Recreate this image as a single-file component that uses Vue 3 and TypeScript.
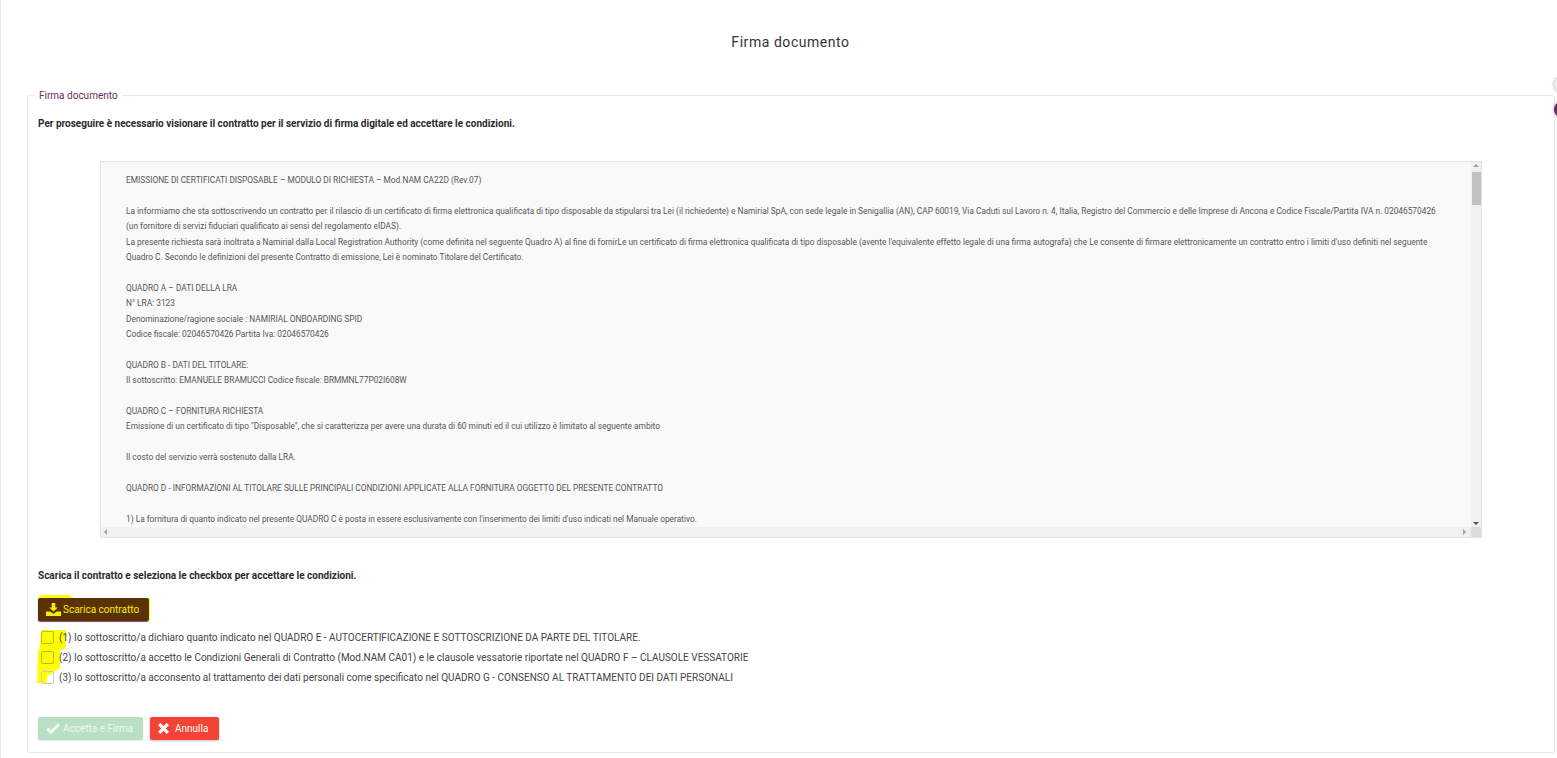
<script setup lang="ts">
const contractLines: string[] = [
  'EMISSIONE DI CERTIFICATI DISPOSABLE – MODULO DI RICHIESTA – Mod.NAM CA22D (Rev.07)',
  '',
  'La informiamo che sta sottoscrivendo un contratto per il rilascio di un certificato di firma elettronica qualificata di tipo disposable da stipularsi tra Lei (il richiedente) e Namirial SpA, con sede legale in Senigallia (AN), CAP 60019, Via Caduti sul Lavoro n. 4, Italia, Registro del Commercio e delle Imprese di Ancona e Codice Fiscale/Partita IVA n. 02046570426',
  '(un fornitore di servizi fiduciari qualificato ai sensi del regolamento eIDAS).',
  'La presente richiesta sarà inoltrata a Namirial dalla Local Registration Authority (come definita nel seguente Quadro A) al fine di fornirLe un certificato di firma elettronica qualificata di tipo disposable (avente l\'equivalente effetto legale di una firma autografa) che Le consente di firmare elettronicamente un contratto entro i limiti d\'uso definiti nel seguente',
  'Quadro C. Secondo le definizioni del presente Contratto di emissione, Lei è nominato Titolare del Certificato.',
  '',
  'QUADRO A – DATI DELLA LRA',
  'N° LRA: 3123',
  'Denominazione/ragione sociale : NAMIRIAL ONBOARDING SPID',
  'Codice fiscale: 02046570426 Partita Iva: 02046570426',
  '',
  'QUADRO B - DATI DEL TITOLARE:',
  'Il sottoscritto: EMANUELE BRAMUCCI Codice fiscale: BRMMNL77P02I608W',
  '',
  'QUADRO C – FORNITURA RICHIESTA',
  'Emissione di un certificato di tipo "Disposable", che si caratterizza per avere una durata di 60 minuti ed il cui utilizzo è limitato al seguente ambito',
  '',
  'Il costo del servizio verrà sostenuto dalla LRA.',
  '',
  'QUADRO D - INFORMAZIONI AL TITOLARE SULLE PRINCIPALI CONDIZIONI APPLICATE ALLA FORNITURA OGGETTO DEL PRESENTE CONTRATTO',
  '',
  '1) La fornitura di quanto indicato nel presente QUADRO C è posta in essere esclusivamente con l\'inserimento dei limiti d\'uso indicati nel Manuale operativo.',
]

const conditions: string[] = [
  '(1) Io sottoscritto/a dichiaro quanto indicato nel QUADRO E - AUTOCERTIFICAZIONE E SOTTOSCRIZIONE DA PARTE DEL TITOLARE.',
  '(2) Io sottoscritto/a accetto le Condizioni Generali di Contratto (Mod.NAM CA01) e le clausole vessatorie riportate nel QUADRO F – CLAUSOLE VESSATORIE',
  '(3) Io sottoscritto/a acconsento al trattamento dei dati personali come specificato nel QUADRO G - CONSENSO AL TRATTAMENTO DEI DATI PERSONALI',
]
</script>

<template>
  <div class="page">
    <h1 class="title">Firma documento</h1>

    <fieldset class="panel">
      <legend>Firma documento</legend>

      <p class="lead lead-top">Per proseguire è necessario visionare il contratto per il servizio di firma digitale ed accettare le condizioni.</p>

      <div class="contract">
        <div class="contract-text">
          <div v-for="(line, i) in contractLines" :key="i" class="line">{{ line }}</div>
        </div>
        <div class="vbar">
          <span class="arrow up"></span>
          <span class="thumb"></span>
          <span class="arrow down"></span>
        </div>
        <div class="hbar">
          <span class="arrow left"></span>
          <span class="arrow right"></span>
        </div>
        <div class="corner"></div>
      </div>

      <p class="lead lead-bottom">Scarica il contratto e seleziona le checkbox per accettare le condizioni.</p>

      <div class="download-wrap">
        <span class="marker-btn"></span>
        <button class="btn btn-download" type="button">
          <svg width="15" height="13" viewBox="0 0 15 13" fill="currentColor">
            <path d="M5.7 0h3.6v4.4h2.6L7.5 8.6 3.1 4.4h2.6z" />
            <path d="M0 8.6h4.2l3.3 2.2 3.3-2.2H15V13H0z" />
          </svg>
          Scarica contratto
        </button>
      </div>

      <div class="conditions">
        <svg class="marker-checks" width="36" height="58" viewBox="0 0 36 58" fill="#ffff00">
          <path d="M7 3H32V21L26 23V41L13 49V56H3L4 24L6 20Z" />
        </svg>
        <label v-for="(text, i) in conditions" :key="i" class="condition">
          <span class="check" :class="{ lit: i < 2 }"></span>
          <span class="condition-text">{{ text }}</span>
        </label>
      </div>

      <div class="actions">
        <button class="btn btn-accept" type="button">
          <svg width="14" height="11" viewBox="0 0 14 11" fill="none" stroke="currentColor" stroke-width="3">
            <path d="M1.2 5.6 5 9.2 12.8 1.4" />
          </svg>
          Accetta e Firma
        </button>
        <button class="btn btn-cancel" type="button">
          <svg width="11" height="11" viewBox="0 0 11 11" fill="none" stroke="currentColor" stroke-width="3.2">
            <path d="M1.2 1.2l8.6 8.6M9.8 1.2l-8.6 8.6" />
          </svg>
          Annulla
        </button>
      </div>
    </fieldset>

    <span class="float-dot light"></span>
    <span class="float-dot dark"></span>
  </div>
</template>

<style>
html,
body {
  margin: 0;
  background: #fff;
  overflow: hidden;
}
</style>

<style scoped>
.page {
  position: relative;
  box-sizing: border-box;
  width: 1557px;
  height: 758px;
  padding: 0 0 0 27px;
  border-left: 1px solid #e8e8e8;
  overflow: hidden;
  font-family: Roboto, "Liberation Sans", sans-serif;
  color: #444;
}

.title {
  margin: 0;
  padding-top: 33px;
  height: 89px;
  box-sizing: border-box;
  text-align: center;
  font-size: 14px;
  font-weight: 400;
  line-height: 18px;
  letter-spacing: 0.55px;
  color: #333;
  transform: translateX(-2px);
}

.panel {
  box-sizing: border-box;
  width: 1528px;
  height: 664px;
  margin: 0 0 0 -1px;
  padding: 0 10px;
  border: 1px solid #e8e8e8;
  border-radius: 3px;
  min-width: 0;
}

legend {
  position: relative;
  top: 1px;
  margin-left: -3px;
  padding: 0 4px;
  font-size: 10px;
  line-height: 12px;
  color: #6b2d5e;
}

.lead {
  margin: 0;
  font-size: 10px;
  font-weight: 700;
  line-height: 14px;
  color: #2b2b2b;
}

.lead-top {
  padding-top: 16px;
}

.lead-bottom {
  margin-top: 31px;
}

.contract {
  box-sizing: border-box;
  display: grid;
  grid-template-columns: 1fr 10px;
  grid-template-rows: 1fr 10px;
  width: 1382px;
  height: 377px;
  margin: 30px 0 0 62px;
  border: 1px solid #e4e4e4;
  background: #f9f9f9;
}

.contract-text {
  overflow: hidden;
  padding: 11px 0 0 25px;
  font-size: 8.33px;
  color: #555;
}

.line {
  height: 15.4px;
  line-height: 15.4px;
  white-space: nowrap;
}

.vbar {
  background: #f1f1f1;
  display: flex;
  flex-direction: column;
  align-items: center;
}

.thumb {
  display: block;
  width: 9px;
  height: 33px;
  margin-top: 5px;
  background: #c1c1c1;
}

.hbar {
  display: flex;
  justify-content: space-between;
  align-items: center;
  padding: 0 5px 0 3px;
  background: #f1f1f1;
}

.corner {
  background: #dcdcdc;
}

.arrow {
  display: block;
  width: 0;
  height: 0;
  border: 3px solid transparent;
}

.arrow.up {
  margin-top: 2px;
  border-top: 0;
  border-bottom: 3px solid #a0a0a0;
}

.arrow.down {
  margin-top: auto;
  margin-bottom: 2px;
  border-bottom: 0;
  border-top: 3px solid #505050;
}

.arrow.left {
  border-left: 0;
  border-right: 3px solid #a0a0a0;
}

.arrow.right {
  border-right: 0;
  border-left: 3px solid #a0a0a0;
}

.download-wrap {
  position: relative;
  margin-top: 15px;
  height: 27px;
}

.marker-btn {
  position: absolute;
  left: 0;
  top: -3px;
  width: 36px;
  height: 6px;
  border-radius: 8px 10px 0 0;
  background: #ffff00;
}

.btn {
  position: relative;
  box-sizing: border-box;
  display: inline-flex;
  align-items: center;
  gap: 3px;
  height: 23px;
  padding: 0 8px;
  border: 0;
  border-radius: 2px;
  font-family: inherit;
  font-size: 10px;
  box-shadow: 0 1px 3px rgba(0, 0, 0, 0.25);
}

.btn-download {
  gap: 2px;
  width: 111px;
  background: #5a3100;
  color: #f5f000;
  box-shadow: 1px 0 0 #ffff00, 0 1px 1px #7a4a78;
}

.conditions {
  position: relative;
  margin-top: 2px;
}

.marker-checks {
  position: absolute;
  left: -4px;
  top: 0;
}

.condition {
  position: relative;
  display: flex;
  align-items: center;
  height: 20px;
  padding-left: 3px;
}

.check {
  box-sizing: border-box;
  flex: none;
  width: 13px;
  height: 13px;
  margin-right: 5px;
  border: 1px solid #c9c9c9;
  border-radius: 2px;
}

.check.lit {
  border-color: #bcbc14;
}

.condition-text {
  padding-top: 1px;
  font-size: 10px;
  line-height: 14px;
  color: #444;
}

.actions {
  display: flex;
  gap: 7px;
  margin-top: 30px;
}

.btn-accept {
  gap: 3px;
  width: 105px;
  background: #b9dfc5;
  color: #f1f8f3;
  box-shadow: 0 1px 2px rgba(0, 0, 0, 0.1);
}

.btn-cancel {
  gap: 6px;
  width: 69px;
  background: #f44336;
  color: #fff;
}

.float-dot {
  position: absolute;
  left: 1553px;
  width: 14px;
  height: 15px;
  border-radius: 50%;
}

.float-dot.light {
  top: 77px;
  background: #eee;
  box-shadow: 0 0 3px rgba(0, 0, 0, 0.4);
}

.float-dot.dark {
  top: 102px;
  background: #6b2d5e;
  box-shadow: 0 0 3px rgba(0, 0, 0, 0.4);
}
</style>
